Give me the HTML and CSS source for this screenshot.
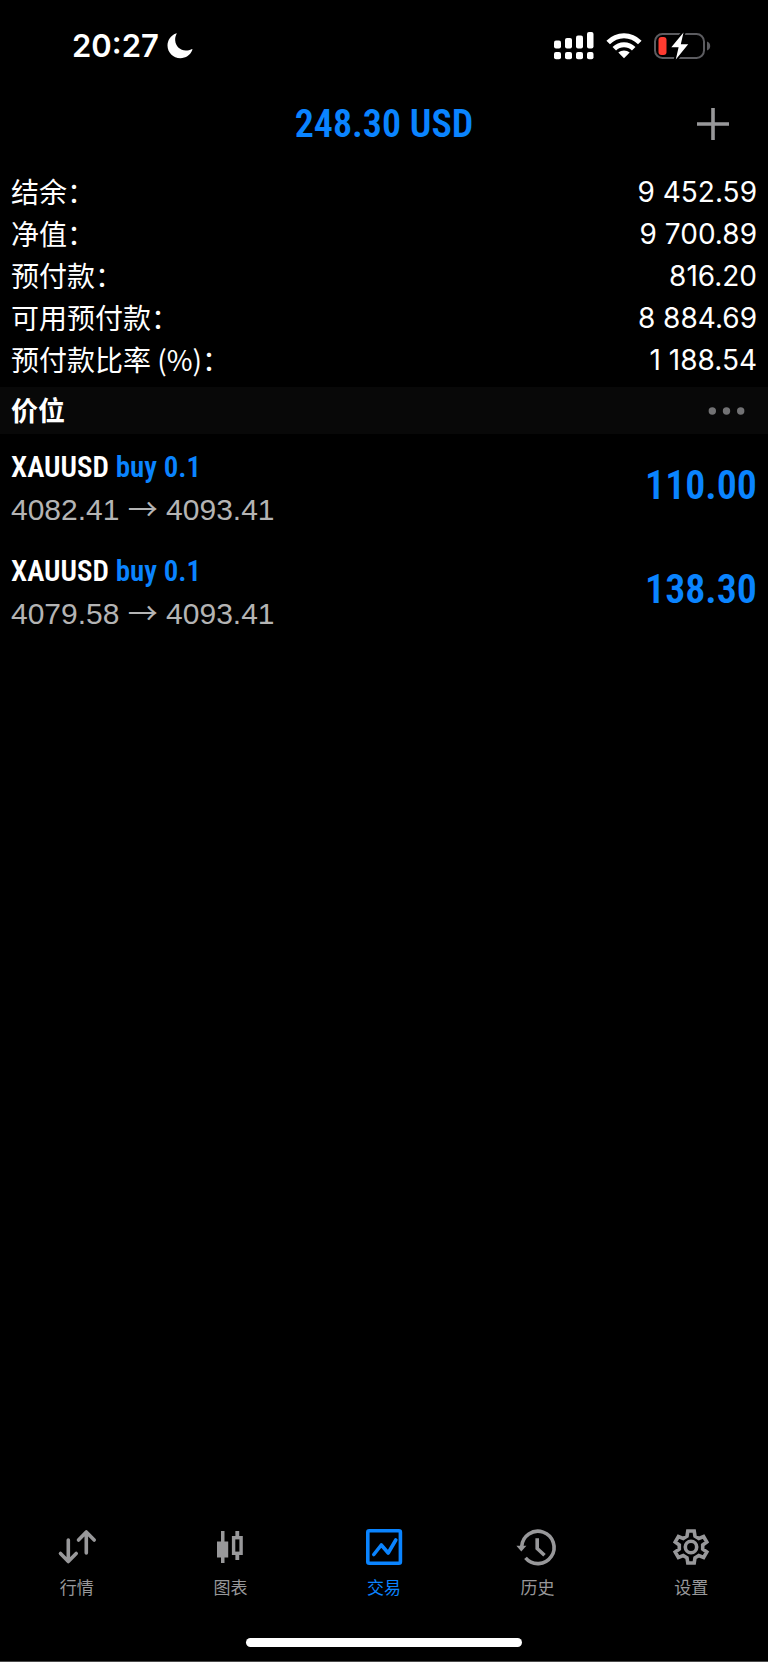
FILE: index.html
```html
<!DOCTYPE html>
<html lang="zh-CN">
<head>
<meta charset="utf-8">
<meta name="viewport" content="width=device-width, initial-scale=1">
<title>交易</title>
<link rel="stylesheet" href="styles.css">
</head>
<body>
<div class="app">
  <div class="status">
    <div class="status-left">
      <span class="clock">20:27</span>
      <svg class="moon" width="26" height="26" viewBox="0 0 26 26" aria-hidden="true"><path d="M9.600 .8C8.500 3 8 5.200 8.200 7.500C8.700 13.500 13.200 17.400 18.800 17.500C21 17.500 23 17 24.600 16.200C25.200 15.900 25.600 16.300 25.300 17C23.400 22 18.800 25.200 13.400 25.200C6.200 25.200 .5 19.500 .5 12.500C.5 7 3.800 2.300 8.900 .4C9.500 .1 9.900 .3 9.600 .8Z" fill="#fff"/></svg>
    </div>
    <div class="status-right">
      <svg width="40" height="28" viewBox="0 0 40 28" fill="#fff" aria-hidden="true">
        <rect x="0" y="8.500" width="7" height="8" rx="2"/><rect x="11" y="6" width="7" height="10.500" rx="2"/><rect x="22" y="3.500" width="7" height="13" rx="2"/><rect x="33" y="0" width="6.500" height="16.500" rx="2"/>
        <rect x="0" y="20" width="7" height="7.200" rx="2"/><rect x="11" y="20" width="7" height="7.200" rx="2"/><rect x="22" y="20" width="7" height="7.200" rx="2"/><rect x="33" y="20" width="6.500" height="7.200" rx="2"/>
      </svg>
      <svg width="36" height="26" viewBox="0 0 36 26" aria-hidden="true"><g fill="none" stroke="#fff" stroke-width="5"><path d="M2.200 9.600C11 .6 25 .6 33.800 9.600"/><path d="M8.300 15.800C13.800 10.400 22.200 10.400 27.700 15.800"/></g><path d="M18 25.200L12.300 19.600C15.500 16.800 20.500 16.800 23.700 19.600Z" fill="#fff"/></svg>
      <svg width="58" height="28" viewBox="0 0 58 28" aria-hidden="true"><rect x="1" y="2" width="49" height="24" rx="7.500" fill="none" stroke="#5c5c60" stroke-width="2"/><path d="M53 9.500C57.300 10.500 57.300 17.500 53 18.500Z" fill="#5c5c60"/><rect x="4.500" y="5" width="8" height="18" rx="3" fill="#ff3b30"/><path d="M29.500 .6L17.300 15.300H24.600L21.800 27.400L34.200 12.300H26.800Z" fill="#fff" stroke="#000" stroke-width="4" stroke-linejoin="round" paint-order="stroke"/></svg>
    </div>
  </div>

  <header class="topbar">
    <h1 class="profit">248.30 USD</h1>
    <button class="icon-button add" type="button" aria-label="新订单"><svg width="34" height="34" viewBox="0 0 34 34"><path d="M17 1V33M1 17H33" stroke="#98989a" stroke-width="3.600"/></svg></button>
  </header>

  <main class="content">
    <dl class="account">
      <div class="account-row"><dt>结余：</dt><dd>9 452.59</dd></div>
      <div class="account-row"><dt>净值：</dt><dd>9 700.89</dd></div>
      <div class="account-row"><dt>预付款：</dt><dd>816.20</dd></div>
      <div class="account-row"><dt>可用预付款：</dt><dd>8 884.69</dd></div>
      <div class="account-row"><dt>预付款比率 (%)：</dt><dd>1 188.54</dd></div>
    </dl>
    <div class="section">
      <h2 class="section-title">价位</h2>
      <button class="icon-button" type="button" aria-label="更多"><svg width="38" height="8" viewBox="0 0 38 8" fill="#727274"><circle cx="4.300" cy="4" r="3.700"/><circle cx="18.500" cy="4" r="3.700"/><circle cx="32.700" cy="4" r="3.700"/></svg></button>
    </div>
    <ul class="positions">
      <li class="position">
        <div class="position-info">
          <div class="deal">XAUUSD <span class="side">buy 0.1</span></div>
          <div class="prices">4082.41 <span class="arrow">→</span> 4093.41</div>
        </div>
        <div class="gain">110.00</div>
      </li>
      <li class="position">
        <div class="position-info">
          <div class="deal">XAUUSD <span class="side">buy 0.1</span></div>
          <div class="prices">4079.58 <span class="arrow">→</span> 4093.41</div>
        </div>
        <div class="gain">138.30</div>
      </li>
    </ul>
  </main>

  <nav class="tabs">
    <a class="tab" href="#quotes"><svg width="38" height="38" viewBox="0 0 38 38" fill="none" stroke="currentColor" stroke-width="3.600" stroke-linecap="round" stroke-linejoin="round"><path d="M10.300 12V33M2.500 25.500L10.300 33.500L18.200 25.500M28.300 25V4M20.500 12L28.300 4L36.200 12"/></svg><span>行情</span></a>
    <a class="tab" href="#charts"><svg width="38" height="38" viewBox="0 0 38 38"><path d="M6 13.500H10V3H13.500V13.500H17.200V29.500H13.500V35H10V29.500H6Z" fill="currentColor"/><path d="M26.300 3V9M26.300 26.500V32" stroke="currentColor" stroke-width="3.800"/><rect x="22.600" y="9.700" width="7.500" height="15.600" fill="none" stroke="currentColor" stroke-width="3.400"/></svg><span>图表</span></a>
    <a class="tab active" href="#trade" aria-current="page"><svg width="38" height="38" viewBox="0 0 38 38" fill="none" stroke="currentColor" stroke-width="3.600" stroke-linecap="round" stroke-linejoin="round"><rect x="2.800" y="2.700" width="32.600" height="32.600" rx="1.500"/><path d="M8.800 26.500L16.300 17L23.200 25L30.800 12"/></svg><span>交易</span></a>
    <a class="tab" href="#history"><svg width="38" height="38" viewBox="0 0 38 38" fill="none" stroke="currentColor" stroke-width="3.600"><path d="M2.700 18.500A16.200 16.200 0 1 1 6.500 29.900"/><path d="M-2.600 17.800H7.400L2.300 23.400Z" fill="currentColor" stroke="none"/><path d="M18.200 10.300V20.500L25.500 27.300"/></svg><span>历史</span></a>
    <a class="tab" href="#settings"><svg width="38" height="38" viewBox="0 0 38 38" fill="none" stroke="currentColor" stroke-width="3.600"><path d="M15.800 3H22.200L23 8.200L26.800 10.400L31.600 8.500L34.800 14L30.700 17V21L34.800 24L31.600 29.500L26.800 27.600L23 29.800L22.200 35H15.800L15 29.800L11.200 27.600L6.400 29.500L3.200 24L7.300 21V17L3.200 14L6.400 8.500L11.200 10.400L15 8.200Z"/><circle cx="19" cy="19" r="5.700"/></svg><span>设置</span></a>
  </nav>
  <div class="home"><div class="home-bar"></div></div>
</div>
</body>
</html>
```
FILE: styles.css
```css
* {
  box-sizing: border-box;
}

body {
  margin: 0;
  background: #000;
  color: #fff;
  font-family: Inter, "Noto Sans CJK SC", sans-serif;
}

h1, h2, dl, dd, ul {
  margin: 0;
  padding: 0;
}

.app {
  display: flex;
  flex-direction: column;
  min-height: 100vh;
  border-bottom: 1px solid #4a4a4a;
}

.status {
  display: flex;
  justify-content: space-between;
  align-items: center;
  height: 90px;
  padding: 2px 56px 0 72px;
}

.status-left {
  display: flex;
  align-items: center;
  gap: 8px;
}

.clock {
  font-size: 31px;
  line-height: 40px;
  font-weight: 600;
}

.status-right {
  display: flex;
  align-items: center;
  gap: 12px;
}

.topbar {
  display: grid;
  grid-template-columns: 1fr auto 1fr;
  align-items: center;
  height: 68px;
  padding: 0 38px;
}

.profit,
.deal,
.gain {
  font-family: "Avenir Next Condensed", "Roboto Condensed", "Open Sans Condensed", "Noto Sans CJK SC", sans-serif;
  font-weight: 600;
}

.profit {
  grid-column: 2;
  font-size: 38px;
  line-height: 48px;
  color: #0a84ff;
}

.icon-button {
  display: flex;
  padding: 0;
  border: 0;
  background: none;
}

.add {
  justify-self: end;
}

.content {
  flex: 1;
}

.account {
  padding: 13px 11px 6px;
}

.account-row {
  display: flex;
  justify-content: space-between;
  font-size: 28px;
  line-height: 42px;
}

.account-row dt {
  font-family: "Noto Sans CJK SC", sans-serif;
  line-height: 40px;
}

.section {
  display: flex;
  justify-content: space-between;
  align-items: center;
  height: 47px;
  padding: 0 22px 0 11px;
  background: #080808;
}

.section-title {
  font-size: 27px;
  line-height: 40px;
  font-weight: 700;
  padding-top: 2px;
}

.positions {
  list-style: none;
}

.position {
  display: flex;
  justify-content: space-between;
  align-items: center;
  height: 104px;
  padding: 0 11px;
}

.position-info {
  padding-top: 4px;
}

.deal {
  font-size: 29px;
  line-height: 44px;
}

.side {
  color: #0a84ff;
}

.prices {
  font-family: "Liberation Sans", sans-serif;
  font-size: 30px;
  line-height: 42px;
  color: #b4b4b4;
}

.arrow {
  font-family: "Noto Sans CJK SC", sans-serif;
  line-height: 1;
}

.gain {
  font-size: 40px;
  line-height: 48px;
  color: #0a84ff;
}

.tabs {
  display: flex;
  padding-bottom: 37px;
}

.tab {
  flex: 1;
  display: flex;
  flex-direction: column;
  align-items: center;
  gap: 7px;
  color: #98989a;
  font-family: "Noto Sans CJK SC", sans-serif;
  font-size: 17px;
  line-height: 28px;
  text-decoration: none;
}

.tab svg {
  overflow: visible;
}

.active {
  color: #0a84ff;
}

.home {
  display: flex;
  justify-content: center;
  padding-bottom: 14px;
}

.home-bar {
  width: 36%;
  height: 9px;
  border-radius: 5px;
  background: #fff;
}
```
